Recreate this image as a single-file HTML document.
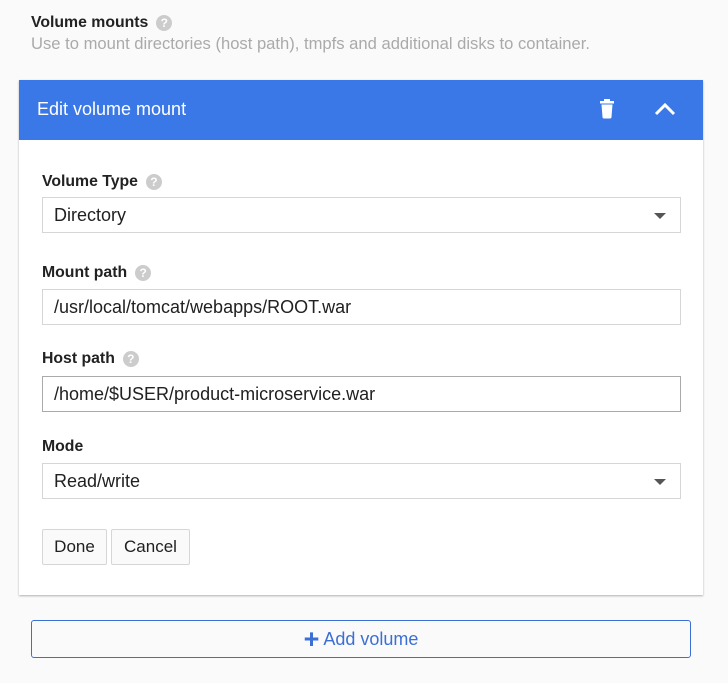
<!DOCTYPE html>
<html><head><style>
*{box-sizing:border-box;margin:0;padding:0}
body{width:728px;height:683px;background:#fafafa;font-family:"Liberation Sans",sans-serif;position:relative;overflow:hidden;color:#212121}
.a{position:absolute}
.q{display:inline-block;width:16px;height:16px;border-radius:50%;background:#ccc;color:#fff;font-size:12px;font-weight:bold;text-align:center;line-height:16px;vertical-align:middle;margin-left:8px}
.lbl{font-size:15.8px;font-weight:bold;color:#222}
.box{left:42px;width:639px;height:36px;border:1px solid #d6d6d6;background:#fff;font-size:18px;padding-left:11px;line-height:35px;color:#212121}
.tri{position:absolute;right:14px;top:15px;width:0;height:0;border-left:6px solid transparent;border-right:6px solid transparent;border-top:6px solid #555}
.btn{top:529px;height:36px;border:1px solid #d6d6d6;border-radius:2px;background:#fafafa;font-size:17px;line-height:34px;text-align:center}
</style></head><body>
<div class="a lbl" style="left:31px;top:14px">Volume mounts<span class="q">?</span></div>
<div class="a" style="left:31px;top:34px;font-size:16.6px;color:#aaa">Use to mount directories (host path), tmpfs and additional disks to container.</div>
<div class="a" style="left:19px;top:80px;width:684px;height:515px;background:#fff;box-shadow:0 1px 2px rgba(0,0,0,.3)"></div>
<div class="a" style="left:19px;top:80px;width:684px;height:60px;background:#3b78e7"></div>
<div class="a" style="left:37px;top:99px;font-size:18px;color:#fff">Edit volume mount</div>
<svg class="a" style="left:598px;top:99px" width="18" height="20" viewBox="0 0 18 20"><rect x="2" y="2" width="14" height="2.5" fill="#fff"/><rect x="6" y="0" width="6" height="3" fill="#fff"/><path d="M3.5 5.5h11l-1 12.5a1.5 1.5 0 0 1-1.5 1.5h-6a1.5 1.5 0 0 1-1.5-1.5z" fill="#fff"/></svg>
<svg class="a" style="left:654px;top:101px" width="22" height="16" viewBox="0 0 22 16"><path d="M2 13L11 4l9 9" stroke="#fff" stroke-width="3" fill="none"/></svg>
<div class="a lbl" style="left:42px;top:173px">Volume Type<span class="q">?</span></div>
<div class="a box" style="top:197px">Directory<div class="tri"></div></div>
<div class="a lbl" style="left:42px;top:264px">Mount path<span class="q">?</span></div>
<div class="a box" style="top:289px">/usr/local/tomcat/webapps/ROOT.war</div>
<div class="a lbl" style="left:42px;top:350px">Host path<span class="q">?</span></div>
<div class="a box" style="top:376px;border-color:#aaa">/home/$USER/product-microservice.war</div>
<div class="a lbl" style="left:42px;top:438px">Mode</div>
<div class="a box" style="top:463px">Read/write<div class="tri"></div></div>
<div class="a btn" style="left:42px;width:65px">Done</div>
<div class="a btn" style="left:111px;width:79px">Cancel</div>
<div class="a" style="left:31px;top:620px;width:660px;height:38px;border:1px solid #3b6fd6;border-radius:3px;background:#fafafa;color:#3b6fd6;font-size:18px;text-align:center;line-height:36px"><span style="font-size:27px;font-weight:bold;vertical-align:-3px;margin-right:4px">+</span>Add volume</div>
</body></html>
